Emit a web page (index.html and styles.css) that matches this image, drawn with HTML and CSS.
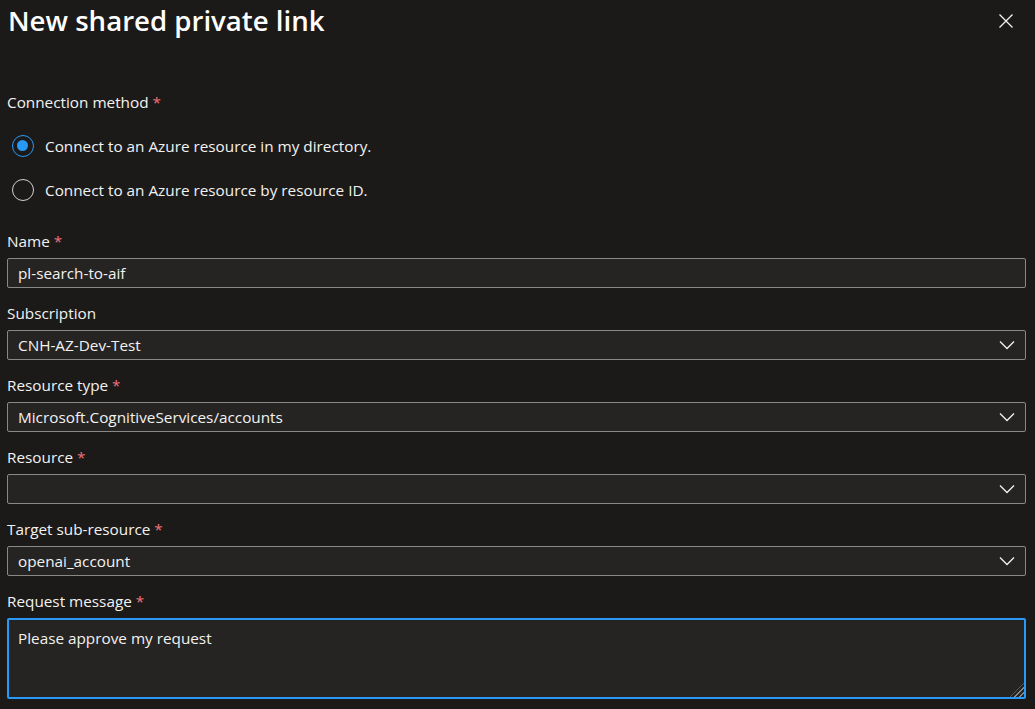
FILE: index.html
```html
<!DOCTYPE html>
<html lang="en">
<head>
    <meta charset="UTF-8">
    <meta name="viewport" content="width=device-width, initial-scale=1.0">
    <title>New shared private link</title>
    <link rel="stylesheet" href="styles.css">
</head>
<body>

<div class="panel">
    <div class="panel-header">
        <h1>New shared private link</h1>
        <button class="close-btn" aria-label="Close">
            <svg width="16" height="16" viewBox="0 0 16 16">
                <path d="M1.5 1.5 L14.5 14.5 M14.5 1.5 L1.5 14.5" stroke="#f3f2f1" stroke-width="1.3" fill="none"/>
            </svg>
        </button>
    </div>

    <form class="panel-body">
        <div class="field-label">Connection method <span class="req">*</span></div>
        <div class="radio-group">
            <label class="radio-row">
                <span class="radio checked"></span>
                Connect to an Azure resource in my directory.
            </label>
            <label class="radio-row">
                <span class="radio"></span>
                Connect to an Azure resource by resource ID.
            </label>
        </div>

        <div class="field">
            <div class="field-label">Name <span class="req">*</span></div>
            <div class="box">pl-search-to-aif</div>
        </div>

        <div class="field">
            <div class="field-label">Subscription</div>
            <div class="box select">
                <span>CNH-AZ-Dev-Test</span>
                <svg class="chevron" width="16" height="10" viewBox="0 0 16 10">
                    <path d="M1 1.5 L8 8.5 L15 1.5" stroke="#f3f2f1" stroke-width="1.3" fill="none"/>
                </svg>
            </div>
        </div>

        <div class="field">
            <div class="field-label">Resource type <span class="req">*</span></div>
            <div class="box select">
                <span>Microsoft.CognitiveServices/accounts</span>
                <svg class="chevron" width="16" height="10" viewBox="0 0 16 10">
                    <path d="M1 1.5 L8 8.5 L15 1.5" stroke="#f3f2f1" stroke-width="1.3" fill="none"/>
                </svg>
            </div>
        </div>

        <div class="field">
            <div class="field-label">Resource <span class="req">*</span></div>
            <div class="box select">
                <span></span>
                <svg class="chevron" width="16" height="10" viewBox="0 0 16 10">
                    <path d="M1 1.5 L8 8.5 L15 1.5" stroke="#f3f2f1" stroke-width="1.3" fill="none"/>
                </svg>
            </div>
        </div>

        <div class="field">
            <div class="field-label">Target sub-resource <span class="req">*</span></div>
            <div class="box select">
                <span>openai_account</span>
                <svg class="chevron" width="16" height="10" viewBox="0 0 16 10">
                    <path d="M1 1.5 L8 8.5 L15 1.5" stroke="#f3f2f1" stroke-width="1.3" fill="none"/>
                </svg>
            </div>
        </div>

        <div class="field">
            <div class="field-label">Request message <span class="req">*</span></div>
            <div class="textarea-wrap">
                <div class="textarea">Please approve my request</div>
                <span class="grip"></span>
            </div>
        </div>
    </form>
</div>

</body>
</html>
```

FILE: styles.css
```css
body {
    margin: 0;
    padding: 0;
    background-color: #1b1a19;
    color: #f3f2f1;
    font-family: "Open Sans", "Noto Sans", Arial, sans-serif;
    font-size: 15.3px;
}

.panel {
    padding: 0 9px 0 7px;
}

.panel-header {
    display: flex;
    justify-content: space-between;
    align-items: flex-start;
    height: 40px;
}

.panel-header h1 {
    margin: 0 0 0 1px;
    font-size: 27.6px;
    font-weight: 600;
    line-height: 40px;
    color: #ffffff;
}

.close-btn {
    margin: 13px 12px 0 0;
    padding: 0;
    background: none;
    border: none;
    width: 16px;
    height: 16px;
    cursor: pointer;
}

.panel-body {
    padding-top: 52px;
}

.field-label {
    line-height: 20px;
    height: 20px;
}

.req {
    color: #f1707b;
}

.radio-group {
    display: flex;
    flex-direction: column;
    gap: 20px;
    padding: 22px 0 29px 0;
}

.radio-row {
    display: flex;
    align-items: center;
    height: 24px;
    gap: 11px;
    padding-left: 5px;
}

.radio {
    box-sizing: border-box;
    width: 22px;
    height: 22px;
    border: 1.5px solid #d2d0ce;
    border-radius: 50%;
    position: relative;
}

.radio.checked {
    border-color: #2899f5;
}

.radio.checked::after {
    content: "";
    position: absolute;
    left: 4px;
    top: 4px;
    width: 11px;
    height: 11px;
    border-radius: 50%;
    background: #2899f5;
}

.field {
    margin-bottom: 15px;
}

.field .field-label {
    margin-bottom: 7px;
}

.box {
    box-sizing: border-box;
    height: 30px;
    border: 1px solid #8a8886;
    border-radius: 2px;
    background: #252423;
    padding: 0 10px;
    display: flex;
    align-items: center;
    line-height: 28px;
}

.select {
    justify-content: space-between;
}

.textarea-wrap {
    position: relative;
}

.textarea {
    box-sizing: border-box;
    height: 81px;
    border: 2px solid #2899f5;
    border-radius: 2px;
    background: #252423;
    padding: 8px 9px;
    line-height: 20px;
}

.grip {
    position: absolute;
    right: 2px;
    bottom: 2px;
    width: 14px;
    height: 14px;
    background: repeating-linear-gradient(135deg, transparent 0 2px, #8a8886 2px 3.5px);
    clip-path: polygon(100% 0, 100% 100%, 0 100%);
}
```
